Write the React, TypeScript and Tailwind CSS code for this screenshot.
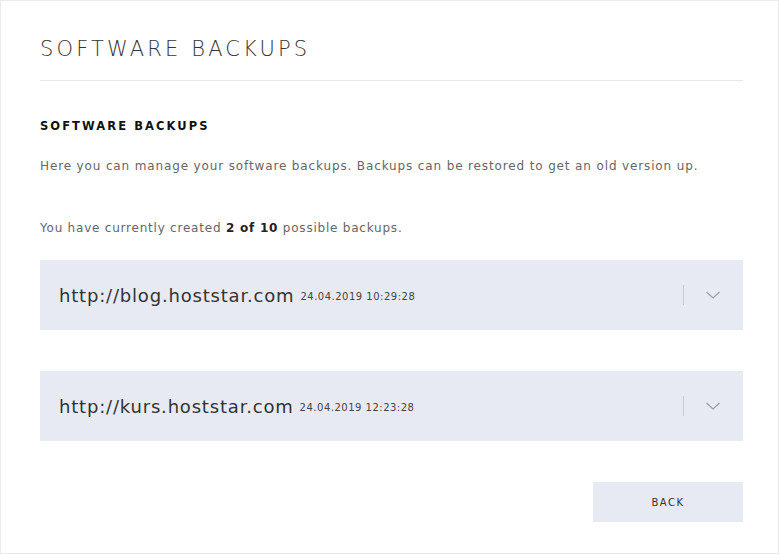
const backups = [
  { url: "http://blog.hoststar.com", date: "24.04.2019 10:29:28" },
  { url: "http://kurs.hoststar.com", date: "24.04.2019 12:23:28" },
];

function Chevron() {
  return (
    <svg width="16" height="10" viewBox="0 0 16 10" fill="none">
      <path d="M1.5 2L8 8L14.5 2" stroke="#9a9ca6" strokeWidth="1.2" />
    </svg>
  );
}

export default function App() {
  return (
    <div
      className="w-[779px] h-[554px] border border-[#ebebeb] bg-white pl-[39px] pr-[35px]"
      style={{ fontFamily: '"DejaVu Sans", "Liberation Sans", sans-serif' }}
    >
      <div className="pt-[36px] pb-[19px] border-b border-[#e8e9ee]">
        <h1 className="text-[21px] leading-[24px] font-extralight tracking-[0.15em] text-[#333]">
          SOFTWARE BACKUPS
        </h1>
      </div>

      <h2 className="mt-[37px] text-[11.5px] leading-[16px] font-bold tracking-[0.18em] text-[#111]">
        SOFTWARE BACKUPS
      </h2>

      <p className="mt-[24px] text-[12px] leading-[16px] tracking-[0.072em] text-[#666]">
        Here you can manage your software backups. Backups can be restored to get an old version up.
      </p>

      <p className="mt-[46px] text-[12px] leading-[16px] tracking-[0.065em] text-[#666]">
        You have currently created <span className="font-bold text-[#222]">2 of 10</span> possible backups.
      </p>

      <div className="mt-[24px] flex flex-col gap-[41px]">
        {backups.map((b) => (
          <div
            key={b.url}
            className="h-[70px] bg-[#e8eaf3] flex items-center pl-[19px] pr-[22px]"
          >
            <span className="text-[18px] text-[#333] tracking-[0.045em]">{b.url}</span>
            <span className="ml-[6px] mt-[3px] text-[10px] tracking-[0.05em] text-[#444]">{b.date}</span>
            <div className="ml-auto flex items-center">
              <div className="w-px h-[20px] bg-[#c9cbd3]" />
              <div className="ml-[21px]">
                <Chevron />
              </div>
            </div>
          </div>
        ))}
      </div>

      <div className="mt-[41px] flex justify-end">
        <button className="w-[150px] h-[40px] bg-[#e8eaf3] text-[10px] tracking-[0.15em] text-[#333]">
          BACK
        </button>
      </div>
    </div>
  );
}
